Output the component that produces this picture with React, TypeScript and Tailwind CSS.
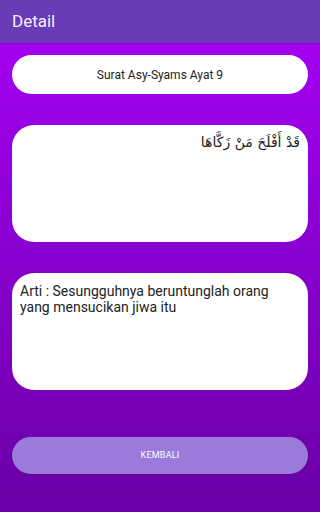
export default function App() {
  return (
    <div
      className="w-[320px] h-[512px] flex flex-col bg-gradient-to-b from-[#a800f8] to-[#6a00a6]"
      style={{ fontFamily: 'Roboto, "Noto Sans", sans-serif' }}
    >
      {/* App bar */}
      <div className="h-[43px] bg-[#6a3bb6] flex items-center px-3 shadow-sm">
        <h1 className="text-[17px] text-white/95 leading-none">Detail</h1>
      </div>

      <div className="flex-1 flex flex-col px-3 pt-[12px]">
        {/* Title */}
        <div className="h-[39px] bg-white rounded-full flex items-center justify-center">
          <span className="text-[12px] text-[#222]">Surat Asy-Syams Ayat 9</span>
        </div>

        {/* Arabic */}
        <div className="mt-[31px] h-[117px] bg-white rounded-[22px] px-2 pt-[9px] text-right">
          <p
            dir="rtl"
            className="text-[14px] text-[#222] leading-tight"
            style={{ fontFamily: '"DejaVu Sans", sans-serif' }}
          >
            قَدْ أَفْلَحَ مَنْ زَكَّاهَا
          </p>
        </div>

        {/* Meaning */}
        <div className="mt-[31px] h-[117px] bg-white rounded-[22px] px-2 pt-[10px]">
          <p className="text-[14px] text-[#222] leading-[16px]">
            Arti : Sesungguhnya beruntunglah orang yang mensucikan jiwa itu
          </p>
        </div>

        {/* Back button */}
        <button className="mt-[47px] h-[37px] w-full rounded-full bg-[#9a7bd9] text-[9px] text-white tracking-wide shadow">
          KEMBALI
        </button>
      </div>
    </div>
  )
}
